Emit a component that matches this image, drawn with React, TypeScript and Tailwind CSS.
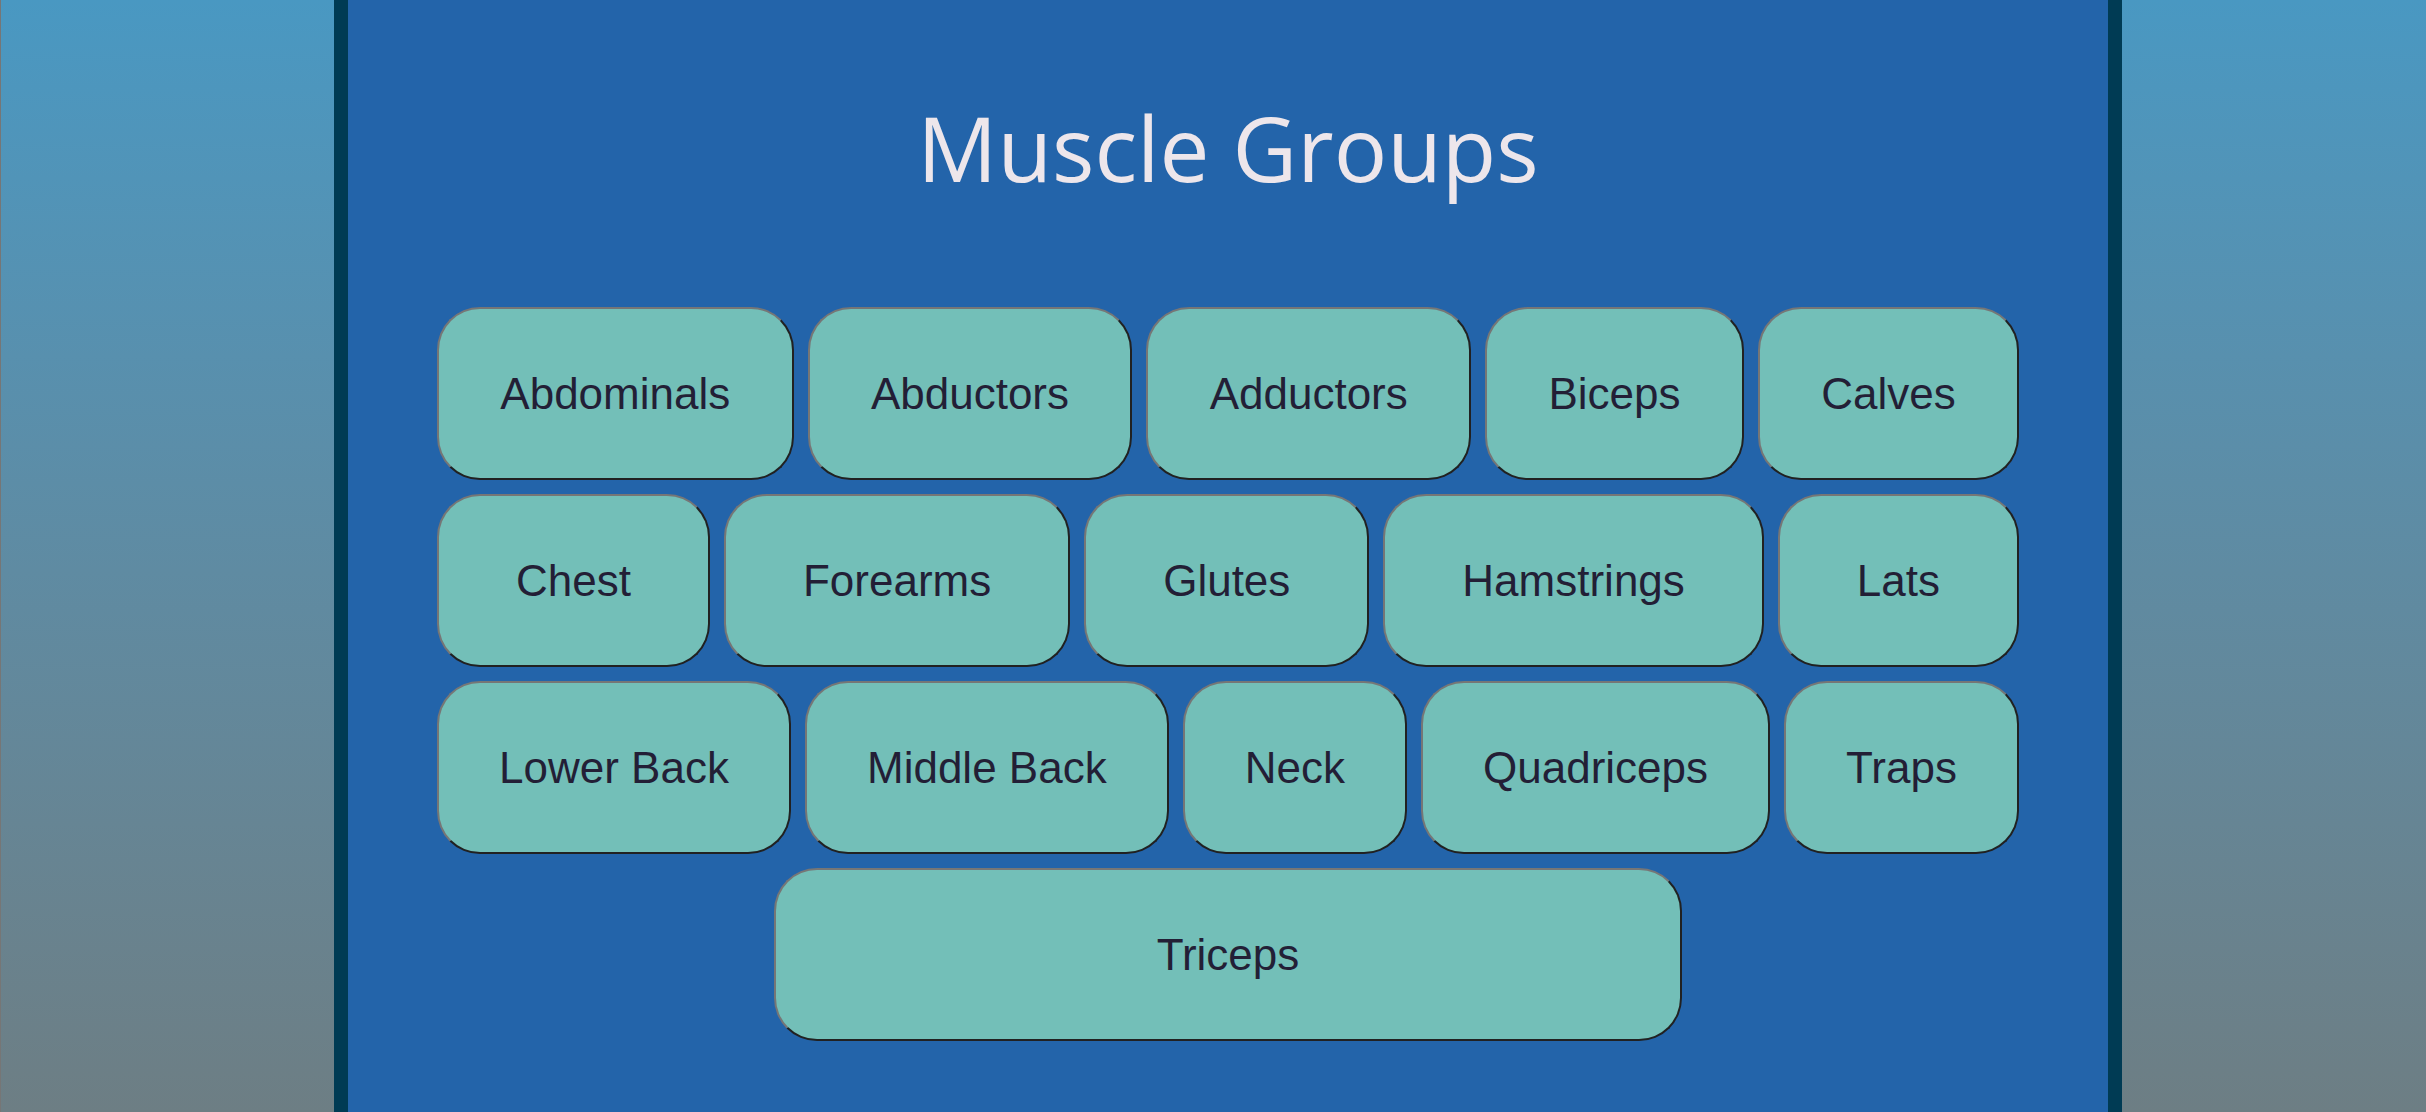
const muscleGroups = [
  "Abdominals",
  "Abductors",
  "Adductors",
  "Biceps",
  "Calves",
  "Chest",
  "Forearms",
  "Glutes",
  "Hamstrings",
  "Lats",
  "Lower Back",
  "Middle Back",
  "Neck",
  "Quadriceps",
  "Traps",
  "Triceps",
];

export default function App() {
  return (
    <div className="flex min-h-screen border-l border-[#767676] bg-linear-to-b from-[#4998c2] to-[#6d7e84] pr-[304px] pl-[333px]">
      <main className="flex-1 border-x-14 border-[#003b54] bg-[#2364aa] px-[89px] pb-16">
        <h1 className="pt-[82px] pb-[93px] text-center font-['Open_Sans',sans-serif] text-[89px] leading-[132px] text-[#ede6eb]">
          Muscle Groups
        </h1>
        <div className="flex flex-wrap justify-center gap-[14px]">
          {muscleGroups.map((name) => (
            <button
              key={name}
              type="button"
              className="h-[173px] max-w-[908px] grow rounded-[43px] border-2 border-t-[#767676] border-r-[#212121] border-b-[#212121] border-l-[#767676] bg-[#73bfb8] px-[58px] font-['Liberation_Sans',Arial,sans-serif] text-[44px] text-[#231f36]"
            >
              {name}
            </button>
          ))}
        </div>
      </main>
    </div>
  );
}
